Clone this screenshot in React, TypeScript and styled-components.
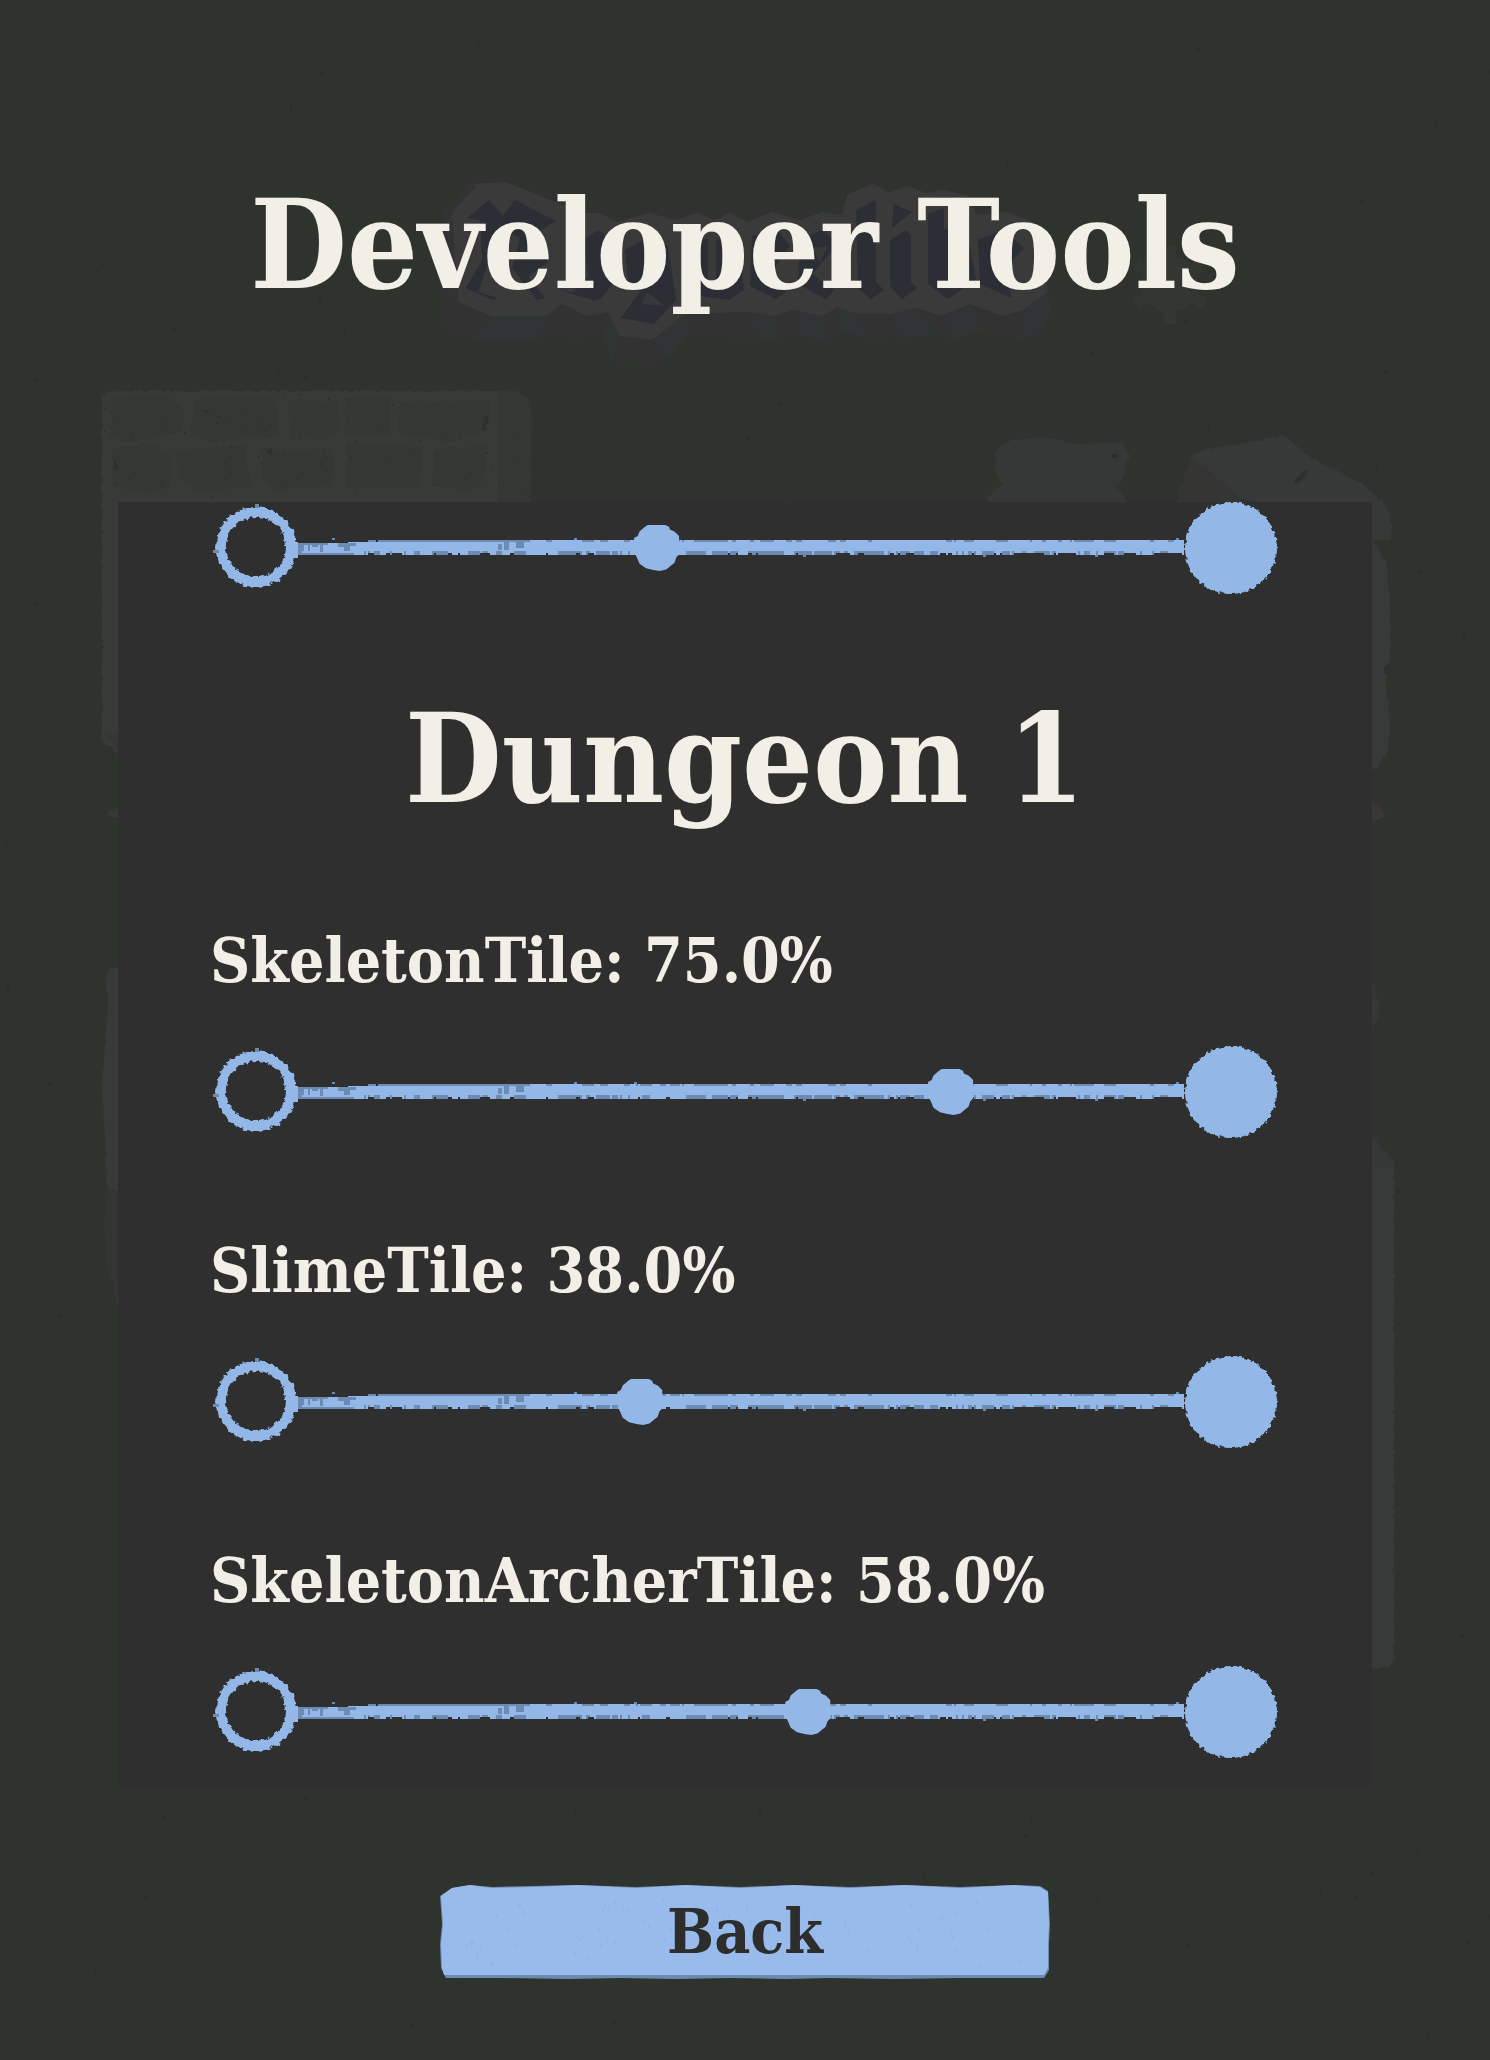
import React, { useId, useState } from "react";
import styled, { createGlobalStyle } from "styled-components";

const color = {
  ground: "#2e332d",
  panel: "#2f2f2f",
  text: "#f2efe7",
  ink: "#2d2d2c",
  blue: "#93b7e6",
  blueDim: "#6c8bb2",
  button: "#99bbeb",
};

const GlobalStyle = createGlobalStyle`
  *, *::before, *::after { box-sizing: border-box; }
  body {
    margin: 0;
    background: ${color.ground};
    color: ${color.text};
    font-family: "DejaVu Serif Condensed", "DejaVu Serif", serif;
    font-weight: 700;
  }
`;

const Page = styled.main`
  position: relative;
  isolation: isolate;
  overflow: hidden;
  display: flex;
  flex-direction: column;
  align-items: center;
  min-height: 100vh;
  padding: 165px 118px 81px;
`;

const Backdrop = styled.svg`
  position: absolute;
  inset: 0;
  z-index: -1;
  width: 100%;
  height: 100%;
`;

const Title = styled.h1`
  margin: 0;
  font-size: 124px;
  font-weight: 700;
  line-height: 160px;
  text-align: center;
`;

const Panel = styled.section`
  align-self: stretch;
  flex: 1;
  margin: 177px 0 98px;
  padding: 0 92px 24px;
  background: ${color.panel};
`;

const SectionTitle = styled.h2`
  margin: 85px 0 82px;
  font-size: 124px;
  font-weight: 700;
  line-height: 160px;
  text-align: center;
`;

const SettingList = styled.div`
  display: flex;
  flex-direction: column;
  gap: 93px;
`;

const Setting = styled.div`
  display: flex;
  flex-direction: column;
  gap: 45px;
`;

const SettingLabel = styled.label`
  font-size: 62px;
  line-height: 80px;
`;

const SliderRow = styled.div`
  display: flex;
  align-items: center;
  height: 92px;
`;

const EndCap = styled.svg<{ $width: number }>`
  flex: none;
  width: ${(p) => p.$width}px;
  height: 92px;
  overflow: visible;
`;

const Rail = styled.div`
  flex: 1;
  min-width: 0;
  display: grid;
  align-items: center;

  & > * { grid-area: 1 / 1; }
`;

const RailLine = styled.svg`
  display: block;
  width: 100%;
  height: 24px;
  overflow: visible;
`;

const thumb = `
  width: 46px;
  height: 46px;
  border: 0;
  border-radius: 0;
  background: ${color.blue};
  clip-path: polygon(24% 4%, 30% 0, 68% 0, 76% 4%, 78% 10%, 88% 14%, 98% 24%, 98% 34%, 100% 40%, 98% 64%, 92% 70%, 88% 82%, 78% 90%, 70% 97%, 56% 100%, 42% 98%, 26% 94%, 12% 84%, 6% 70%, 2% 62%, 0 28%, 8% 24%, 12% 14%);
`;

const Range = styled.input`
  appearance: none;
  width: 100%;
  height: 46px;
  margin: 0;
  background: transparent;
  cursor: pointer;

  &::-webkit-slider-runnable-track { height: 46px; background: transparent; }
  &::-webkit-slider-thumb { appearance: none; ${thumb} }
  &::-moz-range-thumb { ${thumb} }
`;

const BackButton = styled.button`
  position: relative;
  isolation: isolate;
  width: 610px;
  max-width: 100%;
  height: 95px;
  padding: 0;
  border: 0;
  background: transparent;
  color: ${color.ink};
  font: inherit;
  font-size: 62px;
  line-height: 80px;
  cursor: pointer;
`;

const ButtonArt = styled.svg`
  position: absolute;
  inset: 0;
  z-index: -1;
  width: 100%;
  height: 100%;
`;

// Repeatable noise, so that the chalk grain stays the same between renders.
function noise(seed: number) {
  let s = seed;
  return () => {
    s = (s * 16807) % 2147483647;
    return s / 2147483647;
  };
}

const rnd = noise(77);

const bits = Array.from({ length: 230 }, () => ({
  x: 66 + Math.floor(rnd() * 406) * 2,
  w: 2 + Math.floor(rnd() * rnd() * 9) * 2,
  low: rnd() > 0.3,
  gap: rnd() > 0.55,
}));

const spikes = [34, 276, 336, 505, 685, 797, 878];

const specks = Array.from({ length: 420 }, () => ({
  x: Math.floor(rnd() * 745) * 2,
  y: Math.floor(rnd() * 1030) * 2,
  w: 2 + Math.floor(rnd() * 2) * 2,
  h: 2 + Math.floor(rnd() * 3) * 2,
}));

const wallPits = Array.from({ length: 60 }, () => ({
  x: 104 + Math.floor(rnd() * 210) * 2,
  y: 394 + Math.floor(rnd() * 52) * 2,
}));

const grain = Array.from({ length: 110 }, () => ({
  x: 20 + Math.floor(rnd() * 285) * 2,
  y: 14 + Math.floor(rnd() * 34) * 2,
  h: 2 + Math.floor(rnd() * 3) * 2,
}));

function Slider(props: {
  id: string;
  value: number;
  label?: string;
  onChange: (v: number) => void;
}) {
  const rough = `rough-${props.id}`;
  return (
    <SliderRow>
      <EndCap $width={88} viewBox="0 0 88 92" aria-hidden="true">
        <filter id={rough} x="-10%" y="-10%" width="120%" height="120%">
          <feTurbulence type="fractalNoise" baseFrequency="0.22" numOctaves={2} seed={4} />
          <feDisplacementMap in="SourceGraphic" scale={6} xChannelSelector="R" yChannelSelector="G" />
        </filter>
        <circle
          cx="46"
          cy="45"
          r="35"
          fill="none"
          stroke={color.blue}
          strokeWidth="10"
          filter={`url(#${rough})`}
        />
        <path d="M45 2h4v4h-4zM3 48h6v3H3z" fill={color.blueDim} />
        <path d="M81 40h7v16h-7z" fill={color.blue} />
      </EndCap>
      <Rail>
        <RailLine viewBox="0 1 886 24" preserveAspectRatio="none" aria-hidden="true">
          <path d="M0 8H50V7H92V5H886V20H0Z" fill={color.blue} />
          <path
            d="M0 8h30v2H6v6H4v4H0zM10 10h2v6h-2zM14 10h6v2h-6zM22 10h3v7h-3zM40 8h18v3h-6v5h-6v-4h-6zM0 18h56v2H0z"
            fill={color.blueDim}
          />
          <path d="M92 5h130v2H92zM200 9h4v6h-4zM206 7h5v8h-5zM218 5h8v8h-8z" fill={color.blueDim} />
          {bits.map((b, i) => (
            <rect
              key={i}
              x={b.x}
              y={b.low ? (b.gap ? 18 : 16) : 5}
              width={b.w}
              height={b.low ? 4 : 2}
              fill={b.low && b.gap ? color.panel : color.blueDim}
            />
          ))}
          {spikes.map((x) => (
            <rect key={x} x={x} y={x % 2 ? 20 : 3} width="3" height="2" fill={color.blueDim} />
          ))}
        </RailLine>
        <Range
          id={props.id}
          type="range"
          min={0}
          max={100}
          step={1}
          value={props.value}
          aria-label={props.label}
          onChange={(e) => props.onChange(Number(e.target.value))}
        />
      </Rail>
      <EndCap $width={96} viewBox="0 0 96 92" aria-hidden="true">
        <circle cx="47" cy="46" r="46" fill={color.blue} filter={`url(#${rough})`} />
      </EndCap>
    </SliderRow>
  );
}

function TileSetting({ name, initial }: { name: string; initial: number }) {
  const id = useId();
  const [value, setValue] = useState(initial);
  return (
    <Setting>
      <SettingLabel htmlFor={id}>
        {name}: {value.toFixed(1)}%
      </SettingLabel>
      <Slider id={id} value={value} onChange={setValue} />
    </Setting>
  );
}

function DungeonBackdrop() {
  return (
    <Backdrop viewBox="0 0 1490 2060" preserveAspectRatio="xMidYMin slice" aria-hidden="true">
      <filter
        id="stone-edge"
        x="-5%"
        y="-5%"
        width="110%"
        height="110%"
        colorInterpolationFilters="sRGB"
      >
        <feTurbulence type="fractalNoise" baseFrequency="0.2" numOctaves={2} seed={9} />
        <feDisplacementMap in="SourceGraphic" scale={5} xChannelSelector="R" yChannelSelector="G" />
      </filter>
      <g fill="#2b302b">
        {specks.map((s, i) => (
          <rect key={i} x={s.x} y={s.y} width={s.w} height={s.h} />
        ))}
      </g>

      {/* Carved emblem: extruded side, face, then the cut facets */}
      <path
        fill="#323233"
        d="M443 210 438 303 443 327 474 340H537L552 329 577 341 602 335 613 362 646 366 667 359 686 337 774 340 798 334 827 342 843 332 867 339 900 338 937 336 953 340 982 330 1017 340 1037 335 1052 313 1047 247Z"
      />
      <path
        fill="#303434"
        d="M491 316H546L537 340H474ZM608 312 619 336 613 362 602 335ZM652 340 686 314 686 337 667 359ZM747 312 774 316 774 340 760 339ZM793 310 823 316 827 342 798 334ZM837 307 858 314 867 339 843 332ZM890 314 917 308 937 336 900 338ZM942 316 970 304 982 330 953 340ZM1023 310 1047 293 1052 313 1037 335 1017 340Z"
      />
      <path
        fill="#3a3a3b"
        d="M447 206 470 184 506 182 556 202 583 213H600L617 222 650 213 675 220 697 213 713 220 730 213 747 222 772 212 800 220 823 212 842 215 847 195 873 183 888 193 907 186 927 193 943 190 967 195 977 215 1007 212 1033 222 1047 247V293L1023 310 1003 316 970 304 942 316 917 308 890 314H858L837 307 823 316 793 310 774 316 747 312 686 314 652 340 619 336 608 312 587 316 562 304 546 316H491L458 302V270L447 250Z"
      />
      <path fill="#323335" d="M443 210 470 184 476 186 452 212 458 302 443 293Z" />
      <path
        fill="#2c2e35"
        d="M467 218 489 200 503 216 515 200 556 221 530 236 548 262 528 276 545 298 537 300 512 268 520 238 500 228 478 292 498 298 492 300 466 288 482 260 480 220Z
           M548 284 570 292 600 290 596 301 572 294Z
           M583 240 598 230 614 240V282L600 300 574 290 588 276Z
           M625 250 650 236 668 246 676 300 654 324 621 318 640 292 628 280Z
           M690 245 708 238V284L738 292 729 300 700 296 686 284Z
           M716 240 738 236 744 290 730 299 716 286Z
           M752 236 776 228 790 246 770 274 786 292 776 299 750 286Z
           M800 240 822 230 838 244 812 274 834 290 826 299 798 284Z
           M856 210 876 200V282L884 290 871 299 858 288Z
           M894 204 912 212 892 228ZM890 240 906 230 911 236V282L917 288 902 299 890 286Z
           M928 214 944 208V230L966 226 976 280 948 299 928 284Z
           M978 240 1003 230 1024 248 1004 270 1012 298 980 284Z"
      />
      <path fill="#37383a" d="M641 304 648 292 664 306ZM812 248 828 246 820 262ZM994 256 1006 250 1002 270Z" />

      {/* Gear behind the heading */}
      <g fill="#323731" stroke="#323731">
        <circle cx="1170" cy="284" r="28" />
        <path strokeWidth="12" d="M1170 246v78M1136 264l68 40M1136 304l68-40" />
      </g>

      {/* Brick wall */}
      <g filter="url(#stone-edge)">
        <path fill="#383a38" d="M102 396 110 391H515L528 398 531 410V540H130V762L102 741Z" />
        <path fill="#353735" d="M498 391H515L528 398 531 410V510H498ZM104 734H130V762Z" />
        <path
          fill="#353735"
          d="M112 396 165 394 184 410 182 432 130 442 110 436ZM196 400 210 396 276 398 278 436 208 442 190 430ZM288 400 338 402 340 432 324 440 290 438ZM344 398 390 396V436L346 434ZM400 402 490 400 488 430 450 442 398 434ZM112 448 150 444 172 456 170 486 150 494 112 486ZM176 450 244 446 252 488 196 490 178 476ZM262 452 326 448 336 462 330 486 274 490 262 478ZM346 442 368 444 422 448 420 488 346 488ZM434 450 486 446 484 482 470 490 432 486Z"
        />
      </g>
      <g fill="#2f312f">
        {wallPits.map((p, i) => (
          <rect key={i} x={p.x} y={p.y} width="2" height="2" />
        ))}
        <path d="M484 416h4v8h-2v6h-4v-8h2zM268 448h4v6h-6v-4h2zM114 460h2v4h2v6h-4z" />
      </g>

      {/* Loose stones */}
      <g filter="url(#stone-edge)">
        <path fill="#353836" d="M997 448 1012 440 1045 437 1080 444 1122 442 1131 456 1126 464 1122 482 1114 486 1126 498V520H988V496L1002 484 994 470Z" />
        <path fill="#353534" d="M1192 456 1178 490V520H1260L1240 498Z" />
        <path fill="#373938" d="M1192 456 1204 450 1284 436 1312 458 1362 484 1387 506 1392 526 1390 540H1360L1240 498Z" />
        <path fill="#383a39" d="M1360 540H1372L1386 562 1390 600V660L1386 674 1390 730 1386 756 1374 769H1360Z" />
        <path fill="#3a3836" d="M1360 794 1376 804 1387 814 1372 823H1360ZM130 800 106 814 130 822Z" />
        <path fill="#353836" d="M1360 980H1371L1378 1000V1016L1372 1030H1360ZM1360 1124 1374 1138 1394 1161V1240H1360Z" />
        <path fill="#383a39" d="M1360 1168H1394V1660L1388 1668H1360Z" />
        <path fill="#383a39" d="M130 968H110L106 976 108 1010 102 1080 104 1120 108 1192 130 1210Z" />
        <path fill="#323532" d="M130 1190H108L104 1220 106 1260 116 1300 120 1330H130Z" />
      </g>
      <path fill="#2e302e" d="M1294 480 1304 470h4l-2 6-8 8h-4zM1384 668 1390 662v12h-6zM1112 454h6v4h-6z" />
    </Backdrop>
  );
}

export default function App() {
  const [topValue, setTopValue] = useState(40);
  return (
    <>
      <GlobalStyle />
      <Page>
        <DungeonBackdrop />
        <Title>Developer Tools</Title>
        <Panel>
          <Slider id="top-slider" label="Tile chance" value={topValue} onChange={setTopValue} />
          <SectionTitle>Dungeon 1</SectionTitle>
          <SettingList>
            <TileSetting name="SkeletonTile" initial={75} />
            <TileSetting name="SlimeTile" initial={38} />
            <TileSetting name="SkeletonArcherTile" initial={58} />
          </SettingList>
        </Panel>
        <BackButton type="button">
          <ButtonArt viewBox="0 0 610 95" preserveAspectRatio="none" aria-hidden="true">
            <path
              fill={color.blueDim}
              d="M0 12 12 4 30 1 52 3 92 2 138 1 196 3 246 1 300 3 354 1 410 3 464 1 520 3 574 1 600 2 608 7 610 40 609 60 609 86 604 94 520 94 454 95 390 94 346 95 290 94 236 95 180 94 128 95 60 94 6 94 1 84 0 60 2 40Z"
            />
            <path
              fill={color.button}
              d="M1 12 12 4 30 1 52 4 92 3 138 1 196 4 246 1 300 4 354 1 410 4 464 1 520 4 574 1 600 3 608 8 609 40 608 60 608 84 604 91 20 91 4 91 2 84 1 60 3 40Z"
            />
            <g fill="#94b6e6">
              {grain.map((g, i) => (
                <rect key={i} x={g.x} y={g.y} width="2" height={g.h} />
              ))}
            </g>
          </ButtonArt>
          Back
        </BackButton>
      </Page>
    </>
  );
}
